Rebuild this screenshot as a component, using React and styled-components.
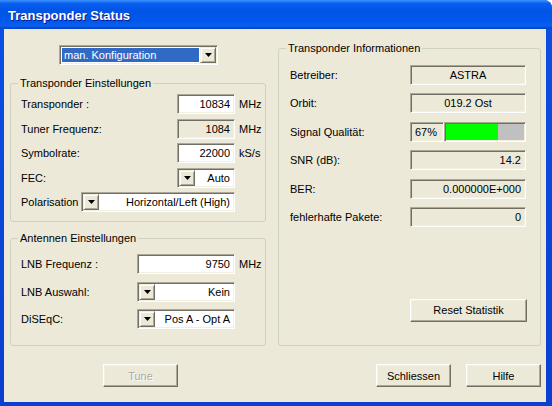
import React from "react";
import styled, { createGlobalStyle } from "styled-components";

const GlobalStyle = createGlobalStyle`
  html, body {
    margin: 0;
    padding: 0;
  }
  body {
    background: #ffffff;
    font-family: "Liberation Sans", Arial, sans-serif;
    font-size: 11px;
    color: #000000;
  }
`;

const Window = styled.div`
  width: 552px;
  height: 406px;
  display: flex;
  flex-direction: column;
  background: #0843dc;
  border-top-right-radius: 8px;
  overflow: hidden;
`;

const TitleBar = styled.div`
  height: 29px;
  flex: none;
  box-sizing: border-box;
  display: flex;
  align-items: center;
  padding: 2px 8px 0;
  background: linear-gradient(
    to bottom,
    #3d95ff 0%,
    #0a5ef0 12%,
    #0054e6 35%,
    #0058ea 75%,
    #0a5ff0 88%,
    #0043c8 100%
  );
  color: #ffffff;
  font: bold 13px "Liberation Sans", Arial, sans-serif;
  text-shadow: 1px 1px #0f1a89;
`;

const Frame = styled.div`
  flex: 1;
  display: flex;
  padding: 0 6px 4px 4px;
  background: linear-gradient(to bottom, #0a4fe4, #0a3fcf);
`;

const Client = styled.div`
  flex: 1;
  display: flex;
  flex-direction: column;
  padding: 0 5px 0 6px;
  background: #ece9d8;
`;

const Columns = styled.div`
  display: flex;
  gap: 12px;
`;

const LeftCol = styled.div`
  width: 256px;
  display: flex;
  flex-direction: column;
  padding-top: 16px;
`;

const RightCol = styled.div`
  width: 263px;
  display: flex;
  flex-direction: column;
  padding-top: 19px;
`;

const GroupBox = styled.div`
  height: ${p => p.h}px;
  margin-top: ${p => p.mt || 0}px;
  box-sizing: border-box;
  display: flex;
  flex-direction: column;
  border: 1px solid #d0d0bf;
  border-radius: 3px;
  padding: 0 ${p => p.pad}px;
`;

const Legend = styled.div`
  align-self: flex-start;
  margin: -7px 0 0 ${p => 7 - p.pad}px;
  padding: 0 2px;
  line-height: 13px;
  background: #ece9d8;
  white-space: nowrap;
`;

const Rows = styled.div`
  display: flex;
  flex-direction: column;
  gap: ${p => p.gap}px;
  margin-top: ${p => p.mt}px;
`;

const Row = styled.div`
  display: flex;
  align-items: center;
  height: 20px;
`;

const Label = styled.span`
  width: ${p => p.w}px;
  flex: none;
  white-space: nowrap;
`;

const Unit = styled.span`
  margin-left: 4px;
  white-space: nowrap;
`;

const Sunken = styled.div`
  width: ${p => p.w}px;
  height: 20px;
  flex: none;
  box-sizing: border-box;
  display: flex;
  align-items: center;
  justify-content: ${p =>
    p.align === "center" ? "center" : p.align === "left" ? "flex-start" : "flex-end"};
  padding: 0 4px;
  border: 1px solid;
  border-color: #aca899 #ffffff #ffffff #aca899;
  box-shadow: inset 1px 1px #716f64, inset -1px -1px #f1efe2;
  background: ${p => (p.readOnly ? "#ece9d8" : "#ffffff")};
  white-space: nowrap;
`;

const Combo = styled(Sunken)`
  padding: 1px;
  justify-content: flex-start;
`;

const ComboText = styled.span`
  flex: 1;
  text-align: right;
  padding-right: 3px;
`;

const SelectedText = styled.span`
  flex: 1;
  align-self: stretch;
  display: flex;
  align-items: center;
  margin: 1px 1px 1px 1px;
  padding-left: 2px;
  background: #316ac5;
  color: #ffffff;
`;

const DropButton = styled.span`
  width: 16px;
  height: 16px;
  flex: none;
  box-sizing: border-box;
  display: flex;
  align-items: center;
  justify-content: center;
  background: #ece9d8;
  border: 1px solid;
  border-color: #f1efe2 #716f64 #716f64 #f1efe2;
  box-shadow: inset 1px 1px #ffffff, inset -1px -1px #aca899;
`;

const Meter = styled(Sunken)`
  padding: 1px;
  justify-content: flex-start;
  background: #c0c0c0;
`;

const MeterFill = styled.div`
  height: 100%;
  width: ${p => p.value}%;
  background: #00ff00;
`;

const Button = styled.button`
  width: ${p => p.w || 75}px;
  height: 23px;
  flex: none;
  box-sizing: border-box;
  padding: 0;
  margin-top: ${p => p.mt || 0}px;
  border: 1px solid;
  border-color: #ffffff #716f64 #716f64 #ffffff;
  box-shadow: inset -1px -1px #aca899, inset 1px 1px #f1efe2;
  background: #ece9d8;
  font: 11px "Liberation Sans", Arial, sans-serif;
  color: ${p => (p.disabled ? "#aca899" : "#000000")};
  text-shadow: ${p => (p.disabled ? "1px 1px #ffffff" : "none")};
`;

const ComboWrap = styled.div`
  display: flex;
  justify-content: center;
  padding-left: 1px;
`;

const ButtonRow = styled.div`
  display: flex;
  align-items: center;
  margin-top: 18px;
  padding-left: 93px;
  gap: 15px;
`;

const Spacer = styled.div`
  flex: 1;
`;

const Arrow = () => (
  <svg width="7" height="4" viewBox="0 0 7 4">
    <polygon points="0,0 7,0 3.5,4" fill="#000" />
  </svg>
);

const LeftCombo = ({ w, text }) => (
  <Combo w={w}>
    <DropButton>
      <Arrow />
    </DropButton>
    <ComboText>{text}</ComboText>
  </Combo>
);

const info = [
  { label: "Betreiber:", value: "ASTRA", align: "center" },
  { label: "Orbit:", value: "019.2 Ost", align: "center" },
  { label: "Signal Qualität:", meter: 67 },
  { label: "SNR (dB):", value: "14.2" },
  { label: "BER:", value: "0.000000E+000" },
  { label: "fehlerhafte Pakete:", value: "0" }
];

export default function App() {
  return (
    <>
      <GlobalStyle />
      <Window>
        <TitleBar>Transponder Status</TitleBar>
        <Frame>
          <Client>
            <Columns>
              <LeftCol>
                <ComboWrap>
                  <Combo w={159}>
                    <SelectedText>man. Konfiguration</SelectedText>
                    <DropButton>
                      <Arrow />
                    </DropButton>
                  </Combo>
                </ComboWrap>

                <GroupBox h={139} mt={18} pad={10}>
                  <Legend pad={10}>Transponder Einstellungen</Legend>
                  <Rows gap={4.5} mt={4}>
                    <Row>
                      <Label w={156}>Transponder :</Label>
                      <Sunken w={58}>10834</Sunken>
                      <Unit>MHz</Unit>
                    </Row>
                    <Row>
                      <Label w={156}>Tuner Frequenz:</Label>
                      <Sunken w={58} readOnly>
                        1084
                      </Sunken>
                      <Unit>MHz</Unit>
                    </Row>
                    <Row>
                      <Label w={156}>Symbolrate:</Label>
                      <Sunken w={58}>22000</Sunken>
                      <Unit>kS/s</Unit>
                    </Row>
                    <Row>
                      <Label w={156}>FEC:</Label>
                      <LeftCombo w={58} text="Auto" />
                    </Row>
                    <Row>
                      <Label w={60}>Polarisation</Label>
                      <LeftCombo w={154} text="Horizontal/Left (High)" />
                    </Row>
                  </Rows>
                </GroupBox>

                <GroupBox h={108} mt={16} pad={10}>
                  <Legend pad={10}>Antennen Einstellungen</Legend>
                  <Rows gap={7.5} mt={9}>
                    <Row>
                      <Label w={116}>LNB Frequenz :</Label>
                      <Sunken w={98}>9750</Sunken>
                      <Unit>MHz</Unit>
                    </Row>
                    <Row>
                      <Label w={116}>LNB Auswahl:</Label>
                      <LeftCombo w={98} text="Kein" />
                    </Row>
                    <Row>
                      <Label w={116}>DiSEqC:</Label>
                      <LeftCombo w={98} text="Pos A - Opt A" />
                    </Row>
                  </Rows>
                </GroupBox>
              </LeftCol>

              <RightCol>
                <GroupBox h={298} pad={11}>
                  <Legend pad={11}>Transponder Informationen</Legend>
                  <Rows gap={8.4} mt={10}>
                    {info.map(item => (
                      <Row key={item.label}>
                        <Label w={120}>{item.label}</Label>
                        {item.meter !== undefined ? (
                          <>
                            <Sunken w={34} readOnly align="left">
                              {item.meter}%
                            </Sunken>
                            <Meter w={82}>
                              <MeterFill value={item.meter} />
                            </Meter>
                          </>
                        ) : (
                          <Sunken w={116} readOnly align={item.align}>
                            {item.value}
                          </Sunken>
                        )}
                      </Row>
                    ))}
                  </Rows>
                  <Button w={117} mt={72} style={{ marginLeft: 120 }}>
                    Reset Statistik
                  </Button>
                </GroupBox>
              </RightCol>
            </Columns>

            <ButtonRow>
              <Button disabled>Tune</Button>
              <Spacer />
              <Button>Schliessen</Button>
              <Button>Hilfe</Button>
            </ButtonRow>
          </Client>
        </Frame>
      </Window>
    </>
  );
}
